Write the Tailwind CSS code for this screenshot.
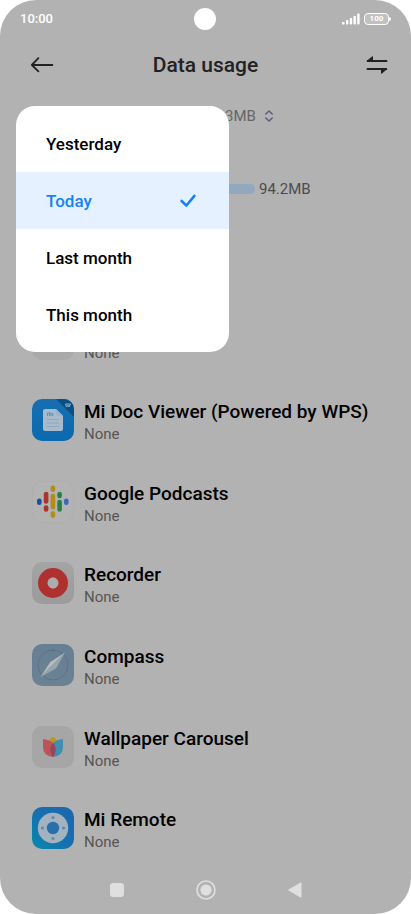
<!DOCTYPE html>
<html lang="en">
<head>
<meta charset="utf-8">
<meta name="viewport" content="width=device-width, initial-scale=1">
<title>Data usage</title>
<script src="https://cdn.jsdelivr.net/npm/@tailwindcss/browser@4"></script>
</head>
<body class="bg-white font-[Roboto,'Noto_Sans',sans-serif] text-black">
<div class="relative flex min-h-screen flex-col overflow-hidden rounded-[36px] bg-[#b2b2b2]">

  <!-- Status bar -->
  <div class="grid h-[38px] grid-cols-3 items-center px-5 text-white">
    <span class="text-[13px] font-medium leading-4">10:00</span>
    <span class="size-[22px] justify-self-center rounded-full bg-white"></span>
    <span class="flex items-center gap-1 justify-self-end">
      <svg class="h-3 w-[18px]" viewBox="0 0 18 12" fill="currentColor" aria-hidden="true">
        <rect x="0" y="9" width="2.6" height="2.5" rx=".8"/><rect x="4" y="7" width="2.4" height="4.5" rx=".8"/><rect x="7.8" y="5" width="2.4" height="6.5" rx=".8"/><rect x="11.5" y="2.8" width="2.4" height="8.7" rx=".8"/><rect x="15.2" y=".5" width="2.4" height="11" rx=".8"/>
      </svg>
      <span class="flex items-center">
        <span class="flex h-3 w-[25px] items-center justify-center rounded-[4px] border border-white bg-white/20 text-[8px] font-bold leading-none">100</span>
        <span class="h-1 w-[2px] rounded-r-sm bg-white"></span>
      </span>
    </span>
  </div>

  <!-- Title bar -->
  <header class="grid h-[54px] grid-cols-[1fr_auto_1fr] items-center px-4 text-[#222]">
    <button type="button" aria-label="Back" class="ml-2 flex size-9 items-center justify-center">
      <svg class="size-6" viewBox="0 0 24 24" fill="none" stroke="currentColor" stroke-width="1.8" stroke-linecap="round" stroke-linejoin="round"><path d="M22.4 12H2M8.4 5.2L1.8 12L8.4 18.3"/></svg>
    </button>
    <h1 class="text-[21px] font-medium leading-7">Data usage</h1>
    <button type="button" aria-label="Switch view" class="flex size-9 items-center justify-center justify-self-end">
      <svg class="size-6" viewBox="0 0 24 24"><path d="M2.600 8H21.500M2.500 16H21.300" fill="none" stroke="#222" stroke-width="1.900" stroke-linecap="round"/><path d="M2.500 8L7.400 4V8ZM21.300 16L16.600 20V16Z" fill="#222" stroke="#222" stroke-width="1.200" stroke-linejoin="round"/></svg>
    </button>
  </header>

  <!-- Period total -->
  <div class="flex h-12 items-center gap-[9px] pl-[225px]">
    <span class="text-[15px] leading-5 text-[#666]">3MB</span>
    <svg class="h-3 w-2" viewBox="0 0 8 12" fill="none" stroke="#5d5b7d" stroke-width="1.5" stroke-linecap="round" stroke-linejoin="round" aria-hidden="true"><path d="M.8 4L4 1L7.2 4M.8 8L4 11L7.2 8"/></svg>
  </div>

  <!-- Usage bar -->
  <div class="flex h-[98px] items-center gap-1 pl-8">
    <span class="h-[10px] w-[223px] rounded-full bg-[#91a8be]"></span>
    <span class="text-[15px] leading-5 text-[#4c4c4c]">94.2MB</span>
  </div>

  <!-- Apps -->
  <ul class="mt-[60px] grid flex-1 auto-rows-fr px-8">
    <li class="flex min-h-20 items-center gap-[10px]">
      <span class="size-[42px] shrink-0 rounded-[10px] bg-[#a9a9a9]"></span>
      <div class="pt-7"><p class="text-[15px] leading-5 text-[#555]">None</p></div>
    </li>
    <li class="flex min-h-20 items-center gap-[10px]">
      <svg class="size-[42px] shrink-0" viewBox="0 0 42 42" aria-hidden="true">
        <defs><linearGradient id="doc" x1="0" y1="0" x2="0" y2="1"><stop stop-color="#176fb0"/><stop offset="1" stop-color="#0b69ae"/></linearGradient><clipPath id="docClip"><rect width="42" height="42" rx="10"/></clipPath></defs>
        <g clip-path="url(#docClip)"><rect width="42" height="42" fill="url(#doc)"/><path d="M24 0H42V18Z" fill="#094f82"/></g>
        <path d="M13 10H24L31 17V30Q31 32 29 32H13Q11 32 11 30V12Q11 10 13 10Z" fill="#a9bbca"/>
        <path d="M24 10V15Q24 17 26 17H31Z" fill="#9cb4c7"/>
        <path d="M15.500 17V14H17.500V17M17.500 14H19V17M20.700 14V17" fill="none" stroke="#5b92bb"/>
        <path d="M15 20.500H27M15 24H27M15 27.500H27" stroke="#8ca8bd" stroke-width=".9"/>
        <path d="M33.500 5L34.500 8L36 6L37 8L38.500 5Z" fill="none" stroke="#92b1c9"/>
      </svg>
      <div class="pt-1"><p class="text-[19px] font-medium leading-6">Mi Doc Viewer (Powered by WPS)</p><p class="text-[15px] leading-5 text-[#555]">None</p></div>
    </li>
    <li class="flex min-h-20 items-center gap-[10px]">
      <svg class="size-[42px] shrink-0" viewBox="0 0 42 42" aria-hidden="true">
        <rect x=".5" y=".5" width="41" height="41" rx="10" fill="#b3b3b3" stroke="#aaa" stroke-width=".5"/>
        <rect x="5" y="17.5" width="4.6" height="6.6" rx="2.3" fill="#194f9e"/><rect x="32" y="17.5" width="4.6" height="6.6" rx="2.3" fill="#3f68b8"/>
        <g fill="#a9352c"><rect x="11.8" y="10.7" width="4.6" height="12" rx="2.3"/><rect x="11.8" y="24.2" width="4.6" height="6.6" rx="2.3"/></g>
        <g fill="#b48d14"><rect x="18.6" y="4.5" width="4.6" height="6.6" rx="2.3"/><rect x="18.6" y="12.7" width="4.6" height="15.8" rx="2.3"/><rect x="18.6" y="30.3" width="4.6" height="6.6" rx="2.3"/></g>
        <g fill="#298044"><rect x="25.3" y="10.7" width="4.6" height="6.6" rx="2.3"/><rect x="25.3" y="18.7" width="4.6" height="12" rx="2.3"/></g>
      </svg>
      <div class="pt-1"><p class="text-[19px] font-medium leading-6">Google Podcasts</p><p class="text-[15px] leading-5 text-[#555]">None</p></div>
    </li>
    <li class="flex min-h-20 items-center gap-[10px]">
      <svg class="size-[42px] shrink-0" viewBox="0 0 42 42" aria-hidden="true">
        <defs><linearGradient id="rec" x1="0" y1="0" x2="0" y2="1"><stop stop-color="#a4a4a4"/><stop offset="1" stop-color="#9b9b9b"/></linearGradient></defs>
        <rect width="42" height="42" rx="10" fill="url(#rec)"/><circle cx="21" cy="21" r="10.2" fill="none" stroke="#b03030" stroke-width="9.6"/><circle cx="21" cy="21" r="5.4" fill="#acacac"/>
      </svg>
      <div class="pt-1"><p class="text-[19px] font-medium leading-6">Recorder</p><p class="text-[15px] leading-5 text-[#555]">None</p></div>
    </li>
    <li class="flex min-h-20 items-center gap-[10px]">
      <svg class="size-[42px] shrink-0" viewBox="0 0 42 42" aria-hidden="true">
        <defs><linearGradient id="com" x1="0" y1="0" x2="0" y2="1"><stop stop-color="#677f94"/><stop offset="1" stop-color="#6b8292"/></linearGradient></defs>
        <rect width="42" height="42" rx="10" fill="url(#com)"/><circle cx="21" cy="21" r="15" fill="none" stroke="#566f84" stroke-width=".7"/><path d="M19.7 6.8L21 5L22.3 6.8Z" fill="#526b80"/>
        <path d="M33 8.5L18.300 18L8.5 33Z" fill="#b3bcc1"/><path d="M33 8.5L24 24.500L8.5 33Z" fill="#97a6ae"/>
      </svg>
      <div class="pt-1"><p class="text-[19px] font-medium leading-6">Compass</p><p class="text-[15px] leading-5 text-[#555]">None</p></div>
    </li>
    <li class="flex min-h-20 items-center gap-[10px]">
      <svg class="size-[42px] shrink-0" viewBox="0 0 42 42" aria-hidden="true">
        <rect width="42" height="42" rx="10" fill="#a6a6a6"/>
        <path d="M21 10.500L26.500 15.500L21 22L15.500 15.500Z" fill="#b99a20"/>
        <path d="M31 13Q20 14 18.500 22Q17.700 27 21 31Q31 30 31 21Z" fill="#408fb1"/>
        <path d="M11 13Q22 14 23.500 22Q24.300 27 21 31Q11 30 11 21Z" fill="#ba5557"/>
        <path d="M21 16.700Q23 19 23.500 22Q24.300 27 21 31Q17.700 27 18.500 22Q19 19 21 16.700Z" fill="#9a4463"/>
      </svg>
      <div class="pt-1"><p class="text-[19px] font-medium leading-6">Wallpaper Carousel</p><p class="text-[15px] leading-5 text-[#555]">None</p></div>
    </li>
    <li class="flex min-h-20 items-center gap-[10px]">
      <svg class="size-[42px] shrink-0" viewBox="0 0 42 42" aria-hidden="true">
        <defs><linearGradient id="rem" x1="1" y1="0" x2="0" y2="1"><stop stop-color="#1f65ad"/><stop offset=".5" stop-color="#176fb0"/><stop offset="1" stop-color="#078aaa"/></linearGradient></defs>
        <rect width="42" height="42" rx="10" fill="url(#rem)"/><circle cx="21" cy="21" r="15.2" fill="#a3b2bf"/><circle cx="21" cy="21" r="6.200" fill="#286fac"/>
        <g fill="#6289a8"><circle cx="21" cy="10.500" r="1.600"/><circle cx="21" cy="31.500" r="1.600"/><circle cx="10.500" cy="21" r="1.600"/><circle cx="31.500" cy="21" r="1.600"/></g>
      </svg>
      <div class="pt-1"><p class="text-[19px] font-medium leading-6">Mi Remote</p><p class="text-[15px] leading-5 text-[#555]">None</p></div>
    </li>
  </ul>

  <!-- Navigation bar -->
  <nav class="flex h-[45px] items-center justify-center gap-[65px] pb-[3px] text-[#dfdfdf]">
    <button type="button" aria-label="Recent apps" class="flex size-6 items-center justify-center"><span class="size-[14px] rounded-[3px] bg-current"></span></button>
    <button type="button" aria-label="Home" class="flex size-6 items-center justify-center">
      <svg class="size-5" viewBox="0 0 20 20"><circle cx="10" cy="10" r="9" fill="none" stroke="currentColor" stroke-width="1.600"/><circle cx="10" cy="10" r="5.600" fill="currentColor"/></svg>
    </button>
    <button type="button" aria-label="Back" class="flex size-6 items-center justify-center">
      <svg class="size-4" viewBox="0 0 16 16"><path d="M1.500 8L14 .7V15.300Z" fill="currentColor" stroke="currentColor" stroke-linejoin="round"/></svg>
    </button>
  </nav>

  <!-- Period menu -->
  <div role="menu" aria-label="Period" class="absolute left-4 top-[106px] flex w-[213px] flex-col overflow-hidden rounded-[19px] bg-white py-[9px] text-[17px] font-medium leading-6">
    <button type="button" role="menuitemradio" aria-checked="false" class="flex h-[57px] items-center px-[30px]">Yesterday</button>
    <button type="button" role="menuitemradio" aria-checked="true" class="flex h-[57px] items-center justify-between bg-[#e5f1ff] px-[30px] text-[#1683f5]">Today
      <svg class="h-4 w-5" viewBox="0 0 20 16" fill="none" stroke="currentColor" stroke-width="2.600" stroke-linecap="round" stroke-linejoin="round" aria-hidden="true"><path d="M2.600 8L7.400 12.500L15.400 2.800"/></svg>
    </button>
    <button type="button" role="menuitemradio" aria-checked="false" class="flex h-[57px] items-center px-[30px]">Last month</button>
    <button type="button" role="menuitemradio" aria-checked="false" class="flex h-[57px] items-center px-[30px]">This month</button>
  </div>
</div>
</body>
</html>
